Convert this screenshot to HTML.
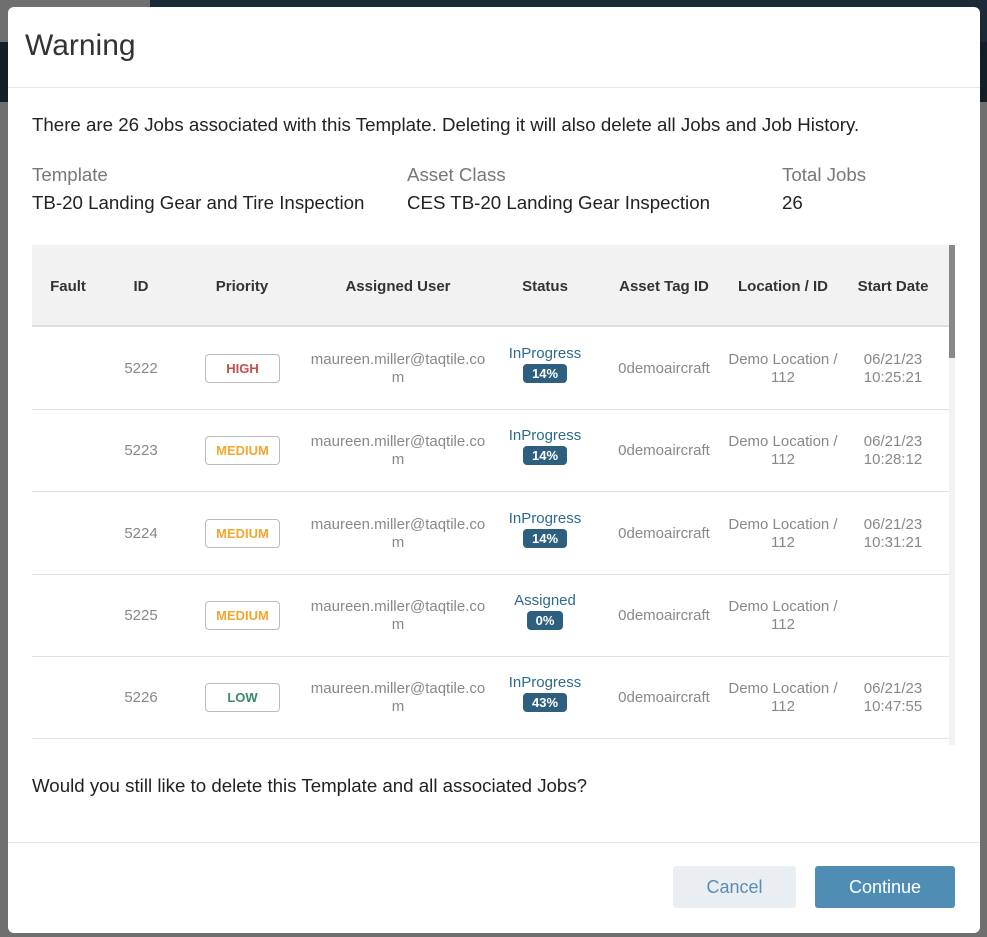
<!DOCTYPE html>
<html><head><style>
*{margin:0;padding:0;box-sizing:border-box}
body{width:987px;height:937px;background:#6f6f6f;font-family:"Liberation Sans",sans-serif;position:relative;overflow:hidden}
.a{position:absolute}
.modal{left:8px;top:7px;width:972px;height:926px;background:#fff;border-radius:6px}
.hd{font-size:15px;font-weight:bold;color:#333;text-align:center}
.c{text-align:center;font-size:15px;color:#888;line-height:18px}
.pr{width:75px;height:29px;border:1px solid #bbb;border-radius:4px;font-size:13px;font-weight:bold;text-align:center;line-height:27px}
.st{color:#2e6a8e;font-size:15px;text-align:center}
.pc{display:inline-block;background:#2e5f7f;color:#fff;font-weight:bold;font-size:13px;border-radius:4px;padding:2px 9px;margin-top:2px}
.t{font-size:18.7px}
</style></head><body>
<div class="a" style="left:150px;top:0;width:837px;height:42px;background:#1c2a37"></div>
<div class="a" style="left:0;top:42px;width:987px;height:60px;background:#151d25"></div>
<div class="a modal">
<div class="a" style="left:17px;top:22px;font-size:30px;color:#333">Warning</div>
<div class="a" style="left:0;top:80px;width:972px;border-top:1px solid #e5e5e5"></div>
<div class="a t" style="left:24px;top:107px;color:#222">There are 26 Jobs associated with this Template. Deleting it will also delete all Jobs and Job History.</div>
<div class="a t" style="left:24px;top:157px;color:#777">Template</div>
<div class="a t" style="left:24px;top:185px;color:#222">TB-20 Landing Gear and Tire Inspection</div>
<div class="a t" style="left:399px;top:157px;color:#777">Asset Class</div>
<div class="a t" style="left:399px;top:185px;color:#222">CES TB-20 Landing Gear Inspection</div>
<div class="a t" style="left:774px;top:157px;color:#777">Total Jobs</div>
<div class="a t" style="left:774px;top:185px;color:#222">26</div>
<div class="a" style="left:24px;top:238px;width:917px;height:82px;background:#f2f2f2;border-bottom:2px solid #ddd"></div>
<div class="a" style="left:941px;top:238px;width:6px;height:500px;background:#f2f2f2"></div>
<div class="a" style="left:941px;top:238px;width:6px;height:113px;background:#888"></div>
</div>
<div id="t"></div>
<script>
var cols=[[68,"Fault"],[141,"ID"],[242,"Priority"],[398,"Assigned User"],[545,"Status"],[664,"Asset Tag ID"],[783,"Location / ID"],[893,"Start Date"]];
var h="";
cols.forEach(function(c){h+='<div class="a hd" style="left:'+(c[0]-60)+'px;width:120px;top:278px">'+c[1]+'</div>'});
var rows=[["5222","HIGH","#c0504d","InProgress","14%","06/21/23<br>10:25:21"],["5223","MEDIUM","#f0a830","InProgress","14%","06/21/23<br>10:28:12"],["5224","MEDIUM","#f0a830","InProgress","14%","06/21/23<br>10:31:21"],["5225","MEDIUM","#f0a830","Assigned","0%",""],["5226","LOW","#3a8a6a","InProgress","43%","06/21/23<br>10:47:55"]];
rows.forEach(function(r,i){var y=328+i*82.3;var m=y+41;
h+='<div class="a c" style="left:101px;width:80px;top:'+(m-9)+'px">'+r[0]+'</div>';
h+='<div class="a pr" style="left:205px;top:'+(m-15)+'px;color:'+r[2]+'">'+r[1]+'</div>';
h+='<div class="a c" style="left:298px;width:200px;top:'+(m-18)+'px">maureen.miller@taqtile.co<br>m</div>';
h+='<div class="a st" style="left:485px;width:120px;top:'+(m-24)+'px">'+r[3]+'<br><span class="pc">'+r[4]+'</span></div>';
h+='<div class="a c" style="left:604px;width:120px;top:'+(m-9)+'px">0demoaircraft</div>';
h+='<div class="a c" style="left:718px;width:130px;top:'+(m-18)+'px">Demo Location /<br>112</div>';
h+='<div class="a c" style="left:843px;width:100px;top:'+(m-18)+'px">'+r[5]+'</div>';
h+='<div class="a" style="left:32px;width:917px;top:'+(y+81)+'px;border-top:1px solid #e3e3e3"></div>';
});
h+='<div class="a t" style="left:32px;top:775px;color:#222">Would you still like to delete this Template and all associated Jobs?</div>';
h+='<div class="a" style="left:8px;top:842px;width:972px;border-top:1px solid #e5e5e5"></div>';
h+='<div class="a" style="left:673px;top:866px;width:123px;height:42px;background:#e8eef1;border-radius:3px;color:#5a8db0;font-size:18px;text-align:center;line-height:42px">Cancel</div>';
h+='<div class="a" style="left:815px;top:866px;width:140px;height:42px;background:#508db5;border-radius:3px;color:#fff;font-size:18px;text-align:center;line-height:42px">Continue</div>';
document.getElementById("t").innerHTML=h;
</script>
</body></html>
